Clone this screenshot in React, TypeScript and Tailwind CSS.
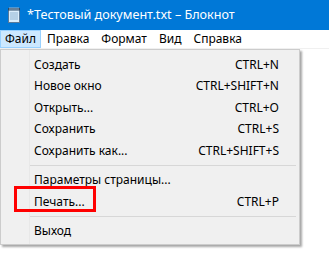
import React from "react";

const font = { fontFamily: '"Noto Sans", "Open Sans", sans-serif' };

function NotepadIcon() {
  return (
    <svg width="14" height="16" viewBox="0 0 14 16">
      <rect x="1.5" y="2.5" width="11" height="13" fill="#dbeefc" stroke="#5a7a99" />
      <path d="M3 6h8M3 8h8M3 10h8M3 12h8" stroke="#8fb3d1" strokeWidth="1" />
      <rect x="1" y="1" width="12" height="2.5" fill="#2f4a66" />
      <path d="M3 0v3M5 0v3M7 0v3M9 0v3M11 0v3" stroke="#9fb6cc" strokeWidth="1" />
    </svg>
  );
}

function Item({ label, shortcut }: { label: string; shortcut?: string }) {
  return (
    <div className="h-[21.5px] flex items-center justify-between pl-[33px] pr-[20px] text-black">
      <span>{label}</span>
      {shortcut && <span>{shortcut}</span>}
    </div>
  );
}

function Sep() {
  return (
    <div className="h-[8px] flex items-center pl-[29px] pr-[3px]">
      <div className="h-px w-full bg-[#d7d7d7]" />
    </div>
  );
}

export default function App() {
  return (
    <div className="w-[329px] h-[270px] bg-white relative overflow-hidden text-[12px]" style={font}>
      <div className="h-[30px] bg-[#0078d7] flex items-center pl-[7px] gap-[6px] text-white text-[12.6px]">
        <NotepadIcon />
        <span>*Тестовый документ.txt – Блокнот</span>
      </div>
      <div className="h-[19px] flex items-stretch border-b border-[#f0f0f0] text-black">
        <div className="px-[4px] flex items-center bg-[#cce8ff] border border-[#99d1ff]">Файл</div>
        <div className="px-[6px] flex items-center">Правка</div>
        <div className="px-[6px] flex items-center">Формат</div>
        <div className="px-[6px] flex items-center">Вид</div>
        <div className="px-[6px] flex items-center">Справка</div>
      </div>
      <div className="absolute left-0 top-[49px] w-[300px] bg-[#f0f0f0] border border-[#cccccc] shadow-[2px_2px_2px_rgba(0,0,0,0.35)] pt-[4px] pb-[2px]">
        <div className="absolute left-[28px] top-0 bottom-0 w-px bg-[#e8e8e8]" />
        <div className="relative">
          <Item label="Создать" shortcut="CTRL+N" />
          <Item label="Новое окно" shortcut="CTRL+SHIFT+N" />
          <Item label="Открыть..." shortcut="CTRL+O" />
          <Item label="Сохранить" shortcut="CTRL+S" />
          <Item label="Сохранить как..." shortcut="CTRL+SHIFT+S" />
          <Sep />
          <Item label="Параметры страницы..." />
          <Item label="Печать..." shortcut="CTRL+P" />
          <Sep />
          <Item label="Выход" />
        </div>
      </div>
      <div className="absolute left-[14px] top-[186px] w-[82px] h-[26px] border-[3px] border-[#ff0000]" />
    </div>
  );
}
